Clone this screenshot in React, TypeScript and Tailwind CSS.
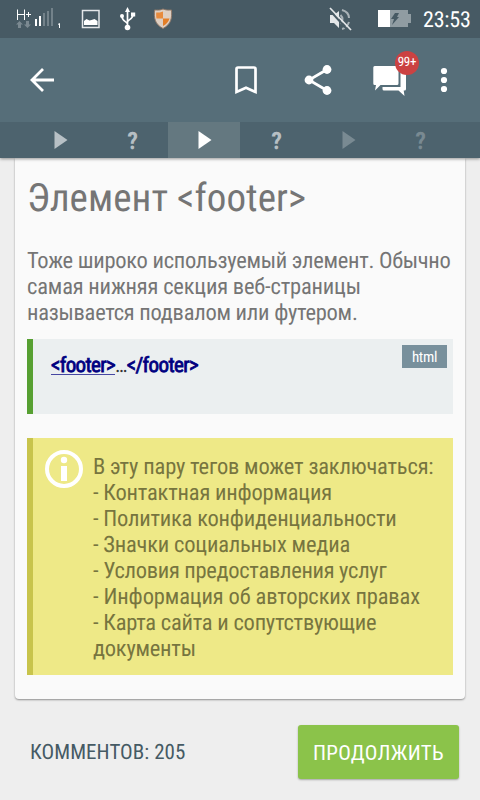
import type { ReactNode } from 'react';

function PlayMark() {
  return <svg className="ml-px" width="14" height="18" viewBox="0 0 14 18" fill="currentColor"><path d="M0.5 0 13.500 9 0.5 18z" /></svg>;
}

const steps = [
  { kind: 'play', tone: 'text-white/60' },
  { kind: 'quiz', tone: 'text-white/60' },
  { kind: 'play', tone: 'text-white bg-[#647880]' },
  { kind: 'quiz', tone: 'text-white/60' },
  { kind: 'play', tone: 'text-white/25' },
  { kind: 'quiz', tone: 'text-white/25' },
];

const notes = [
  { text: 'В эту пару тегов может заключаться:', tracking: 'tracking-[-0.19px]' },
  { text: '- Контактная информация', tracking: 'tracking-[-0.2px]' },
  { text: '- Политика конфиденциальности', tracking: 'tracking-[-0.22px]' },
  { text: '- Значки социальных медиа', tracking: 'tracking-[-0.2px]' },
  { text: '- Условия предоставления услуг', tracking: 'tracking-[-0.3px]' },
  { text: '- Информация об авторских правах', tracking: 'tracking-[-0.13px]' },
  { text: '- Карта сайта и сопутствующие', tracking: 'tracking-[-0.24px]' },
  { text: 'документы', tracking: 'tracking-[-0.25px]' },
];

const intro = [
  { text: 'Тоже широко используемый элемент. Обычно', tracking: 'tracking-[-0.28px]' },
  { text: 'самая нижняя секция веб-страницы', tracking: 'tracking-[-0.19px]' },
  { text: 'называется подвалом или футером.', tracking: 'tracking-[-0.26px]' },
];

function Line({ children, className = '' }: { children: ReactNode; className?: string }) {
  return <div className={`w-max ${className}`}>{children}</div>;
}

function StatusBar() {
  return (
    <div className="flex h-[38px] items-center bg-[#475a64] text-white">
      <svg width="190" height="38" viewBox="0 0 190 38" fill="none">
        <g stroke="#fff" strokeWidth="1">
          <path d="M17.5 9.500V20M24.500 9.500V20M17.500 14.500H24.500M26 14.500H31M28.500 12V17" />
        </g>
        <path d="M16 24.500 19.500 21 23 24.500H21V28H18V24.500zM24 24.500 27.500 28 31 24.500H29V21H26V24.500z" fill="#7b8991" />
        <path d="M35 19h2v7h-2zM39 16h2v10h-2z" fill="#fff" />
        <path d="M43 13h2v13h-2zM47 11h2v15h-2zM51 8h2v18h-2z" fill="#73828a" />
        <path d="M58 24.500 59.500 23.500V28" stroke="#fff" />
        <rect x="82.500" y="10.500" width="16.500" height="17" stroke="#e4e7e9" strokeWidth="1.500" />
        <path d="M84 25V21l2.500-2 3 1.500 2-.5 3-1 3 2v4z" fill="#fff" />
        <g stroke="#fff" strokeWidth="1.700">
          <path d="M127.500 10V27M127.500 24C127 21 122 22 122 16M127.500 22C128 19 133 20 133 14" />
        </g>
        <g fill="#fff"><path d="M127.500 7 130 12H125z" /><circle cx="127.500" cy="27.500" r="2.800" /><circle cx="122" cy="16" r="2" /><rect x="131" y="12.500" width="4.200" height="4" /></g>
        <path d="M163 9c4 1.500 6 1 8.500 1 .5 8 0 14-8.500 18.500-8.500-4.500-9-10.500-8.500-18.500 3 0 5 .5 8.500-1z" fill="#dfcfc2" stroke="#8e7868" strokeWidth="1" />
        <path d="M163 11.500v7h-6.500c-.5-2.500-.3-4-.3-6 3 0 4.500 0 6.800-1z" fill="#e88b3d" />
        <path d="M163 18.500h6.500c-1 3.500-3.500 6-6.500 7.500z" fill="#e47e26" />
      </svg>
      <svg className="ml-auto" width="24" height="24" viewBox="0 0 24 24" fill="none">
        <path d="M2 8h4l5-4v17l-5-5H2z" fill="#e4e7e9" />
        <path d="M12.500 8q4 4 0 9M14 3q7 2 7 8M21 15q-2 6-7 7" stroke="#a9b2b7" strokeWidth="2" />
        <path d="M1 2.500 21 24.500" stroke="#475a64" strokeWidth="2" /><path d="M2 1 23 23" stroke="#e4e7e9" strokeWidth="1.700" />
      </svg>
      <svg className="ml-[26px]" width="34" height="18" viewBox="0 0 34 18">
        <path d="M0 0h12v17H0z" fill="#fff" /><path d="M12 0h18v4h3v9h-3v4H12z" fill="#909ca2" />
        <path d="M17 3h4l-2 4h2l-7 8 2-6h-3z" fill="#475a64" />
      </svg>
      <div className="ml-[11px] mr-[12px] mt-[2px] w-[45px] text-[22px] tracking-[-0.2px]"><Line>23:53</Line></div>
    </div>
  );
}

function Toolbar() {
  return (
    <div className="h-[84px] bg-[#566e79] text-white">
      <svg width="480" height="84" viewBox="0 38 480 84" fill="none">
        <path d="M54 80H32M43 69 32 80 43 91" stroke="#fff" strokeWidth="2.800" />
        <path d="M236.500 69q0-1.500 1.500-1.500h16q1.500 0 1.500 1.500v23l-9.500-4.200-9.500 4.200z" stroke="#fff" strokeWidth="2.700" />
        <path d="M327 69.500 309 80l18 10.500" stroke="#fff" strokeWidth="2.700" />
        <g fill="#fff">
          <circle cx="327" cy="69.500" r="4.400" /><circle cx="309" cy="80" r="4.400" /><circle cx="327" cy="90.500" r="4.400" />
          <path d="M374.700 66h22.300q1.500 0 1.500 1.500v16q0 1.500-1.500 1.500h-16.500l-5.500 5.500 1-5.500h-1.300q-1.400 0-1.400-1.500v-16q0-1.500 1.400-1.500z" />
          <path d="M400.500 72h4q1.500 0 1.500 1.500v15.500q0 1.500-1.500 1.500h-.8l.8 5.500-6-5.500h-14.500q-1.500 0-1.500-1.500v-2h18z" />
          <circle cx="444" cy="71" r="3.100" /><circle cx="444" cy="80" r="3.100" /><circle cx="444" cy="89" r="3.100" />
        </g>
      </svg>
    </div>
  );
}

export default function App() {
  return (
    <div className="relative flex h-[800px] w-[480px] flex-col overflow-hidden bg-[#eee] font-['Roboto_Condensed',Roboto,sans-serif] [font-stretch:75%] [text-rendering:geometricPrecision]">
      <header className="relative z-10 shadow-[0_1px_3px_rgba(0,0,0,0.4)]">
        <StatusBar />
        <Toolbar />
        <div className="absolute left-[395px] top-[51px] flex size-6 items-center justify-center rounded-full bg-[#cb4242] text-[13px] text-white"><Line className="tracking-[-0.2px]">99+</Line></div>
        <nav className="flex h-9 bg-[#4d636e] px-6">
          {steps.map((s, i) => (
            <div key={i} className={`flex w-[72px] items-center justify-center text-[24px] font-bold ${s.tone}`}>
              {s.kind === 'play' ? <PlayMark /> : <span className="pl-px pt-px">?</span>}
            </div>
          ))}
        </nav>
      </header>
      <main className="mx-[15px] h-[541px] rounded-b-[4px] bg-[#fafafa] px-3 shadow-[0_1px_2px_rgba(0,0,0,0.4)]">
        <h1 className="flex h-[89px] items-start pt-[17px] text-[39px] leading-[46px] tracking-[0.05px] text-[#757575]"><Line>Элемент &lt;footer&gt;</Line></h1>
        <div className="h-[92px] pt-px text-[22.5px] leading-[26px] text-[#757575]">{intro.map((l) => <Line key={l.text} className={l.tracking}>{l.text}</Line>)}</div>
        <div className="flex h-[75px] justify-between border-l-[6px] border-[#57a032] bg-[#ebeff0] pl-[18px] pr-[6px] pt-[6px]">
          <div className="pt-[9px] text-[21px] leading-[24px] tracking-[-0.65px] text-[#333]">
            <Line><span className="text-[#000080] underline decoration-[#000080]/70 decoration-1 underline-offset-[2px] [-webkit-text-stroke:0.8px]">&lt;footer&gt;</span>…<span className="text-[#000080] [-webkit-text-stroke:0.8px]">&lt;/footer&gt;</span></Line>
          </div>
          <div className="flex h-[23px] w-[45px] items-center justify-center bg-[#78909c] pt-px text-[15px] tracking-[-0.3px] text-white"><Line>html</Line></div>
        </div>
        <div className="mt-6 flex h-[237px] border-l-[6px] border-[#c8c44c] bg-[#eee987] pl-3 pt-3">
          <svg width="38" height="38" viewBox="0 0 38 38"><circle cx="19" cy="19" r="17" fill="none" stroke="#fff" strokeWidth="4" /><circle cx="19" cy="10" r="3.200" fill="#fff" /><path d="M16 16h6v15h-6z" fill="#fff" /></svg>
          <div className="ml-[10px] mt-[4px] text-[22.5px] leading-[26px] text-[#77753f]">{notes.map((l) => <Line key={l.text} className={l.tracking}>{l.text}</Line>)}</div>
        </div>
      </main>
      <footer className="flex flex-1 items-center justify-between pl-[30px] pr-[21px] pt-[5px]">
        <div className="pt-[4px] text-[21px] tracking-[0.07px] text-[#455a64]"><Line>КОММЕНТОВ: 205</Line></div>
        <button className="flex h-[54px] w-[161px] items-center justify-center rounded-[3px] bg-[#8bc34a] pt-[3px] text-[21px] tracking-[0.3px] text-white shadow-[0_1px_2px_rgba(0,0,0,0.3)]"><Line>ПРОДОЛЖИТЬ</Line></button>
      </footer>
    </div>
  );
}
